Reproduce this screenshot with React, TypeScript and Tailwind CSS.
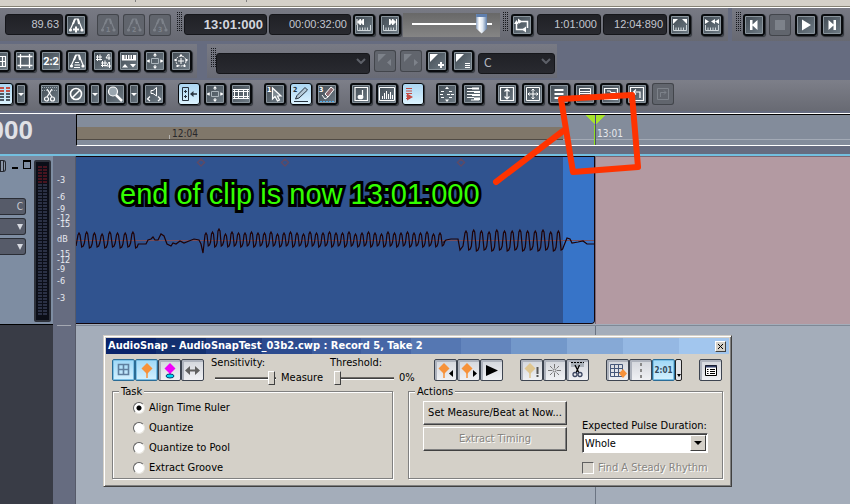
import type { ReactNode } from 'react';
import clsx from 'clsx';

type ToolProps = {
  label: string;
  children: ReactNode;
  active?: boolean;
  disabled?: boolean;
};

// --- Toolbar parts ---
function Tool({ label, children, active, disabled }: ToolProps) {
  return (
    <button
      type="button"
      aria-label={label}
      disabled={disabled}
      className={clsx(
        'h-[22px] w-[22px] shrink-0 rounded-[3px]',
        disabled && 'bg-[#61656d] text-[#7d828a] shadow-[inset_0_0_0_1px_#42454b]',
        active && 'bg-linear-to-b from-[#a9d4f0] to-[#def4ff] text-[#26323e] shadow-[inset_0_0_0_1px_#05070a,1px_1px_1px_#2f3238]',
        !active && !disabled && 'bg-linear-to-br from-[#3d464e] to-[#74818b] text-white shadow-[inset_0_0_0_2px_#090b0e,inset_0_0_0_3px_#89949c,1px_1px_1px_#2f3238]',
      )}
    >
      <svg viewBox="0 0 22 22" className="block h-[22px] w-[22px]" fill="none" stroke="currentColor" strokeWidth="1.2">
        {children}
      </svg>
    </button>
  );
}

function MenuArrow({ label }: { label: string }) {
  return (
    <button
      type="button"
      aria-label={label}
      className="h-[22px] w-[12px] shrink-0 rounded-[3px] bg-linear-to-br from-[#3d464e] to-[#74818b] shadow-[inset_0_0_0_2px_#090b0e,inset_0_0_0_3px_#89949c,1px_1px_1px_#2f3238]"
    >
      <svg viewBox="0 0 12 22" className="block h-[22px] w-[12px]">
        <path d="M3 10H9L6 13Z" fill="#fff" />
      </svg>
    </button>
  );
}

function Grip() {
  return <div className="-mt-0.5 h-5 w-[6px] shrink-0 bg-[conic-gradient(#15171c_25%,transparent_0)] bg-[length:2px_2px]" />;
}

function Readout({ children, bold, className }: { children: ReactNode; bold?: boolean; className?: string }) {
  return (
    <div
      className={clsx(
        "flex h-[21px] shrink-0 items-center justify-end rounded-[3px] border border-[#15161a] bg-linear-to-b from-[#202126] to-[#292a30] pr-[3px] font-['Liberation_Sans',Arial,sans-serif]",
        bold ? 'text-[13px] font-bold text-[#d3d6de]' : 'text-[11px] text-[#c3c6cf]',
        className,
      )}
    >
      {children}
    </div>
  );
}

function DarkSelect({ label, value, className }: { label: string; value: string; className: string }) {
  return (
    <div className={clsx('relative h-[21px] shrink-0', className)}>
      <select
        aria-label={label}
        className="h-full w-full appearance-none rounded-[3px] border border-[#15161a] bg-linear-to-b from-[#202126] to-[#292a30] px-[5px] text-[12px] leading-none text-[#b5b8c0]"
      >
        <option>{value}</option>
      </select>
      <svg viewBox="0 0 10 6" className="pointer-events-none absolute top-2 right-1 h-[6px] w-[10px]">
        <path d="M1 1L5 5L9 1" fill="none" stroke="#5d6068" strokeWidth="2" />
      </svg>
    </div>
  );
}

// --- Glyphs ---
const Metronome = () => (
  <>
    <path d="M5.500 15L10 5H13L17 15" />
    <path d="M10 5L8 10M13 5L14 10" strokeWidth="2" />
    <circle cx="5.500" cy="16" r="1.600" fill="currentColor" stroke="none" />
    <circle cx="17" cy="16" r="1.600" fill="currentColor" stroke="none" />
  </>
);

const RulerTicks = () => <path d="M4.500 11V16.500H17.500V11M7 16V13.500M9.500 16V13.500M12 16V13.500M14.500 16V13.500" stroke="#cfd6da" strokeWidth="1" />;

const Crosshair = () => (
  <>
    <path d="M7.500 8.500H14.500V13.500H7.500Z" stroke="#aab4bb" strokeWidth="1" />
    <path d="M11 4V7M11 15V18M3 11H6M16 11H19" strokeWidth="1" />
    <path d="M11 3L9 5.500H13ZM11 19L9 16.500H13ZM3 11L5.500 9V13ZM19 11L16.500 9V13Z" fill="currentColor" stroke="none" />
  </>
);

const Film = () => (
  <path d="M3 6.500H19M3 15.500H19M4.500 6V16M17.500 6V16M8.500 6V16M13.500 6V16M3 8.500H19M3 13.500H19" strokeWidth="1" />
);

const Digit = ({ x, y, children }: { x: number; y: number; children: string }) => (
  <text x={x} y={y} fontSize="7" fontWeight="700" fill="currentColor" stroke="none">
    {children}
  </text>
);

function TransportBar() {
  return (
    <div className="flex gap-1">
      <div className="flex h-[33px] gap-0.5 bg-linear-to-b from-[#787a84] to-[#676972] pt-[6px] pr-[5px] pl-[5px]">
        <Readout className="w-[58px]">89.63</Readout>
        <Tool label="Insert tempo">
          <Metronome />
          <path d="M8 15.500H14M11 12.500V18.500" strokeWidth="2" />
        </Tool>
        <div className="ml-2 flex gap-1">
          {['1', '2', '3'].map((n) => (
            <Tool key={n} label={`Tempo ratio ${n}`} disabled>
              <Metronome />
              <Digit x={9} y={18}>{n}</Digit>
            </Tool>
          ))}
        </div>
        <div className="ml-[3px]">
          <Grip />
        </div>
        <Readout bold className="w-[83px]">13:01:000</Readout>
        <Readout className="w-[82px]">00:00:32:00</Readout>
        <div className="flex gap-1">
          <Tool label="Rewind ruler">
            <RulerTicks />
            <path d="M4 5V11M10.500 5V11L7.500 8ZM7.500 5V11L4.500 8Z" fill="currentColor" strokeWidth="1" />
          </Tool>
          <Tool label="Forward ruler">
            <RulerTicks />
            <path d="M17.500 5V11M10.500 5V11L13.500 8ZM13.500 5V11L16.500 8Z" fill="currentColor" strokeWidth="1" />
          </Tool>
        </div>
        <div className="-mt-px h-6 w-[97px] bg-linear-to-b from-[#686868] to-[#858585] pr-2 pl-[9px]">
          <input
            type="range"
            aria-label="Position"
            defaultValue={93}
            className="block h-[21px] w-full appearance-none bg-[linear-gradient(#fff,#fff)] bg-[length:100%_2px] bg-center bg-no-repeat [&::-webkit-slider-thumb]:h-5 [&::-webkit-slider-thumb]:w-[11px] [&::-webkit-slider-thumb]:appearance-none [&::-webkit-slider-thumb]:bg-[linear-gradient(#5f7fae_0_3px,transparent_3px),linear-gradient(90deg,#8ba3c4,#fff_30%,#dce5ef_60%,#5f7ea8)] [&::-webkit-slider-thumb]:[clip-path:polygon(0_0,100%_0,100%_75%,50%_100%,0_75%)]"
          />
        </div>
        <Grip />
        <div className="ml-px mr-0.5">
          <Tool label="Loop">
            <path d="M7 7.500H16.500V14M15 15.500H5.500V8" strokeWidth="1.500" />
            <path d="M7 4.500V10.500L11 7.500ZM15 12.500V18.500L11 15.500ZM3 10L5.500 6L8 10Z" fill="currentColor" stroke="none" />
          </Tool>
        </div>
        <Readout className="w-[64px]">1:01:000</Readout>
        <Readout className="w-[64px]">12:04:890</Readout>
        <Tool label="Set loop to selection">
          <RulerTicks />
          <path d="M4 5H9L4 10ZM18 5H13L18 10Z" fill="currentColor" stroke="none" />
        </Tool>
        <div className="ml-2">
          <Tool label="Punch points">
            <RulerTicks />
            <path d="M4 5V10L8 7.500ZM14 5V10L10 7.500ZM18 5V10L14 7.500Z" fill="currentColor" stroke="none" />
          </Tool>
        </div>
      </div>
      <div className="flex h-[33px] flex-1 gap-0.5 bg-linear-to-b from-[#787a84] to-[#676972] pt-[6px] pl-[3px]">
        <Grip />
        <div className="flex gap-1">
          <Tool label="Go to start">
            <path d="M7 6H9.500V10.500L14.500 6V16L9.500 11.500V16H7Z" fill="currentColor" stroke="none" />
          </Tool>
          <Tool label="Stop" disabled>
            <path d="M6 6H16V16H6Z" fill="currentColor" stroke="none" />
          </Tool>
          <Tool label="Play">
            <path d="M7 5.500L16 11L7 16.500Z" fill="currentColor" stroke="none" />
          </Tool>
          <Tool label="Go to end">
            <path d="M15 6H12.500V10.500L7.500 6V16L12.500 11.500V16H15Z" fill="currentColor" stroke="none" />
          </Tool>
        </div>
      </div>
    </div>
  );
}

function ViewBar() {
  return (
    <div className="mt-[3px] flex gap-2.5">
      <div className="flex h-[34px] gap-1 bg-linear-to-b from-[#787a84] to-[#696b75] pt-[6px] pr-[5px]">
        <div className="-ml-3">
          <Tool label="Layout">
            <path d="M5.500 6.500H17.500V16.500H5.500ZM14.500 6V16M5 11.500H17" />
          </Tool>
        </div>
        <Tool label="Fit tracks">
          <path d="M3.500 6.500H18.500M3.500 15.500H18.500M6.500 4V18M15.500 4V18" strokeWidth="1.300" />
        </Tool>
        <Tool label="Ratio">
          <text x="11" y="15" textAnchor="middle" fontSize="11" fontWeight="700" fill="#fff" stroke="none" className="font-['Liberation_Sans_Narrow','Roboto',sans-serif]">
            2:2
          </text>
        </Tool>
        <Tool label="Tempo view">
          <Metronome />
          <path d="M9 12.500H13M8.500 15H14M8 17.500H14" />
        </Tool>
        <Tool label="Meter and key">
          <path d="M5.500 5V11M8 4.500V10.500M4 7H10M4 9.500H10M10.500 11V17M13 10.500V16.500M9 13H15M9 15.500H15" strokeWidth="1" />
          <path d="M16.500 4L14 8H18.500M17 4V10M17 12L14.500 16H19M17.500 12V18" strokeWidth="1" />
        </Tool>
        <Tool label="Staff">
          <path d="M4.500 5.500H17.500V10H4.500Z" fill="currentColor" />
          <path d="M7 5V9M9.500 5V9M12 5V9M14.500 5V9" stroke="#4a535b" strokeWidth="1" />
          <path d="M4 17.500H10L7 14ZM12 14H18L15 17.500Z" fill="currentColor" stroke="none" />
        </Tool>
        <Tool label="Navigator">
          <Crosshair />
        </Tool>
        <Tool label="Surround">
          <circle cx="11" cy="11" r="5" strokeWidth="1" strokeDasharray="2 1" />
          <path d="M11 8V14M8 11H14" strokeWidth="1" />
          <path d="M10 4.500H12V6.500H10ZM4.500 9H6.500V11H4.500ZM15.500 9H17.500V11H15.500ZM6.500 15H8.500V17H6.500ZM13.500 15H15.500V17H13.500Z" fill="currentColor" stroke="none" />
        </Tool>
      </div>
      <div className="flex h-[34px] gap-1 bg-linear-to-b from-[#787a84] to-[#696b75] pt-[6px] pr-[2px] pl-[3px]">
        <Grip />
        <DarkSelect label="Workspace" value="" className="-ml-1 w-[154px]" />
        <Tool label="Previous marker" disabled>
          <path d="M4 4H12L4 12ZM17 9V16L13 12.500Z" fill="currentColor" stroke="none" />
        </Tool>
        <Tool label="Next marker" disabled>
          <path d="M4 4H12L4 12ZM14 9V16L18 12.500Z" fill="currentColor" stroke="none" />
        </Tool>
        <Tool label="Add marker">
          <path d="M4 4H12L4 12Z" fill="currentColor" stroke="none" />
          <path d="M12 15H18M15 12V18" strokeWidth="2" />
        </Tool>
        <Tool label="Marker list">
          <path d="M4 4H12L4 12Z" fill="currentColor" stroke="none" />
          <path d="M13 13.500H18M13 15.500H18M13 17.500H18" strokeWidth="1" />
        </Tool>
        <DarkSelect label="Key" value="C" className="w-[77px]" />
      </div>
    </div>
  );
}

function EditBar() {
  return (
    <div className="mt-0.5 flex h-[31px] bg-linear-to-b from-[#7d7f89] to-[#686a73] pt-[3px]">
      <div className="-ml-[9px] flex gap-0.5">
        <Tool label="Snap grid" active>
          <path d="M11 4V18M17 4V18" strokeWidth="4" strokeDasharray="2 1" stroke="#4d5964" />
          <path d="M9 5H13M15 5H19M9 8H13M15 8H19" stroke="#c24f46" strokeWidth="2" />
        </Tool>
        <MenuArrow label="Snap options" />
      </div>
      <div className="ml-3 flex gap-1">
        <Tool label="Split">
          <path d="M3 4.500H19M3 7.500H19" stroke="#9da7af" strokeWidth="1" strokeDasharray="1 1" />
          <path d="M8 6L13 14M13 6L8 14" />
          <circle cx="7.500" cy="16" r="2" />
          <circle cx="13.500" cy="16" r="2" />
        </Tool>
        <div className="flex gap-0.5">
          <Tool label="Mute tool">
            <circle cx="11" cy="11" r="5.500" strokeWidth="1.600" />
            <path d="M7 15L15 7" strokeWidth="1.600" />
          </Tool>
          <MenuArrow label="Mute options" />
        </div>
        <div className="-ml-px flex gap-0.5">
          <Tool label="Zoom tool">
            <circle cx="9" cy="8.500" r="4.500" fill="#9aa6af" />
            <path d="M12 12L18 18" strokeWidth="2.500" />
          </Tool>
          <MenuArrow label="Zoom options" />
        </div>
        <div className="-ml-px">
          <Tool label="Scrub tool">
            <path d="M8 7.500H10L13.500 4.500V13L10 10.500H8Z" strokeWidth="1" />
            <path d="M7 13.500L4.500 16L7 18M15 13.500L17.500 16L15 18" />
          </Tool>
        </div>
      </div>
      <div className="ml-[13px] flex gap-1">
        <Tool label="Show envelopes" active>
          <path d="M4.500 4.500H10.500V17.500H4.500ZM7.500 7V10M6 8.500H9M7.500 12V15M6 13.500H9" strokeWidth="1" />
          <path d="M12 11L15.500 8V10.300H19V11.700H15.500V14Z" fill="currentColor" stroke="none" />
        </Tool>
        <Tool label="Move clips">
          <Crosshair />
        </Tool>
        <Tool label="Filmstrip">
          <Film />
        </Tool>
      </div>
      <div className="ml-3 flex gap-1">
        <Tool label="Select tool">
          <Digit x={3} y={9}>1</Digit>
          <path d="M8.500 5V16L11 13.500L13.500 18L15.500 17L13.500 13H17Z" fill="#7d8890" />
        </Tool>
        <Tool label="Draw tool" active>
          <Digit x={3} y={9}>2</Digit>
          <path d="M5.500 16L7 12.500L15 4.500L17.500 7L9 15Z" fill="#b4c9d7" strokeWidth="1" />
          <path d="M4 18.500H18" strokeWidth="1" />
        </Tool>
        <Tool label="Erase tool">
          <Digit x={3} y={9}>3</Digit>
          <path d="M9 11L15 4L18 6.500L12 14Z" fill="#8d6d72" strokeWidth="1" />
          <path d="M9 11L12 14M6 12L9 16L12 14" strokeWidth="1" />
          <path d="M4 18.500H18" stroke="#4eaef0" strokeWidth="1" strokeDasharray="2 1" />
        </Tool>
      </div>
      <div className="ml-3 flex gap-1">
        <Tool label="Staff view">
          <path d="M5 4.500H17.500V17.500H5ZM12.500 7V13.500" />
          <ellipse cx="10.500" cy="14" rx="2.300" ry="1.700" fill="currentColor" />
        </Tool>
        <Tool label="Piano roll">
          <path d="M3.500 4.500H18.500V17.500H3.500ZM6.500 16V13M8.500 16V10M10.500 16V8M12.500 16V11M14.500 16V9M16.500 16V12" strokeWidth="1" />
        </Tool>
        <Tool label="Event list" active>
          <path d="M4 5.500H10M4 8H10M4 10.500H10M4 13H8M4 15.500H8" stroke="#c64b43" />
          <path d="M5 10.500L11 14L5 17.500Z" fill="#c64b43" stroke="none" />
        </Tool>
      </div>
      <div className="ml-3 flex gap-1">
        <Tool label="Nudge">
          <path d="M5 8.500H9M13 8.500H17M4 11.500H8M11 11.500H18M5 14.500H9M13 14.500H17" strokeWidth="1" strokeDasharray="3 1" />
          <path d="M9 6H13L11 3.500ZM9 16.500H13L11 19Z" fill="currentColor" stroke="none" />
        </Tool>
        <Tool label="Layers">
          <path d="M5 5.500H10M5 8.500H12M5 11.500H10M5 14.500H12M9 17H17" strokeWidth="1" />
          <path d="M10 4.500H17V6.500H10ZM12 8H18V10H12ZM10 11H18V13H10ZM12 14.500H18V17H12Z" fill="currentColor" stroke="none" />
        </Tool>
      </div>
      <div className="ml-3 flex gap-1">
        <Tool label="Fit height">
          <path d="M4.500 4.500H17.500V17.500H4.500ZM11 7V15M8.500 8.500L11 6L13.500 8.500M8.500 13.500L11 16L13.500 13.500" />
        </Tool>
        <Tool label="Fit window">
          <path d="M4.500 4.500H17.500V17.500H4.500ZM11 6V16M6 11H16M9.500 7.500L11 6L12.500 7.500M9.500 14.500L11 16L12.500 14.500M7.500 9.500L6 11L7.500 12.500M14.500 9.500L16 11L14.500 12.500" strokeWidth="1" />
        </Tool>
        <Tool label="Track list">
          <path d="M6.500 7H15.500M6.500 11H15.500M6.500 15H15.500" strokeWidth="2" />
        </Tool>
        <Tool label="Split view">
          <path d="M5.500 5.500H16.500V16.500H5.500ZM5 10.500H17M5 8.500H17" strokeWidth="1" />
        </Tool>
        <Tool label="Folder view">
          <path d="M4.500 5.500H17.500V16.500H4.500ZM7 8H10L11 9.500H15V14" />
        </Tool>
        <Tool label="Undo view">
          <path d="M4.500 4.500H17.500V17.500H4.500ZM14 15V9H8M10 6.500L7.500 9L10 11.500" />
        </Tool>
        <Tool label="Redo view" disabled>
          <path d="M5.500 5.500H16.500V16.500H5.500ZM8.500 14V9.500H14M12 7.500L14 9.500L12 11.500" strokeWidth="1" />
        </Tool>
      </div>
    </div>
  );
}

// --- Timeline ---
function TimeRuler() {
  return (
    <div className="mt-0.5 flex h-[41px] border-t border-white">
      <div className="flex w-[76px] shrink-0 items-start">
        <div className="flex w-[33px] justify-end pt-[2px] text-[26px] leading-7 font-bold text-[#e0e1e6] font-['Liberation_Sans',Arial,sans-serif]">
          000
        </div>
      </div>
      <div className="relative h-8 flex-1 border-t border-b border-l border-t-black border-b-white border-l-black bg-[#838c9b]">
        <div className="mt-3 h-3 w-[486px] bg-[#80776a]" />
        <div className="flex h-px">
          <div className="w-[486px] bg-[#504a44]" />
          <div className="flex-1 bg-[#a3aab6]" />
        </div>
        <div className="absolute top-[13px] left-[92px] flex items-end gap-[2px] text-[10px] leading-[11px] text-[#28272b]">
          <span className="h-1 w-px bg-[#b5b3b0]" />
          12:04
        </div>
        <svg viewBox="0 0 20 30" className="absolute top-0 left-[508px] h-[30px] w-5" shapeRendering="crispEdges">
          <path d="M0 0H20L10 10Z" fill="#a6e22e" />
          <path d="M10 0H11V10H10Z" fill="#4d3f8f" />
          <path d="M9 10H10V30H9Z" fill="#8fe020" />
          <path d="M10 10H11V30H10Z" fill="#4c5560" />
        </svg>
        <div className="absolute top-[13px] left-[520px] text-[10px] leading-[11px] text-[#e6e8ec]">13:01</div>
      </div>
    </div>
  );
}

const dbMarks = [
  { text: '-3', h: 'h-[17px]' },
  { text: '-6', h: 'h-[12px]' },
  { text: '-9', h: 'h-[9px]' },
  { text: '-12', h: 'h-[6px]' },
  { text: '-15', h: 'h-[15px]' },
  { text: 'dB', h: 'h-[15px]' },
  { text: '-15', h: 'h-[6px]' },
  { text: '-12', h: 'h-[9px]' },
  { text: '-9', h: 'h-[12px]' },
  { text: '-6', h: 'h-[17px]' },
  { text: '-3', h: 'h-[10px]' },
];

function TrackControls() {
  return (
    <div className="flex h-[169px] border-b border-black bg-[#7e8da2]">
      <div className="w-[34px] pt-1">
        <div className="flex h-[38px] items-start">
          <div className="h-3 w-[6px] rounded-r-[3px] border border-l-0 border-[#23262d] bg-[repeating-linear-gradient(90deg,#23262d_0_1px,#8b97a8_1px_3px)]" />
          <button type="button" aria-label="Minimize track" className="mt-[7px] ml-[6px] h-0.5 w-[6px] bg-black" />
          <button type="button" aria-label="Maximize track" className="ml-[5px] h-[9px] w-2 border border-t-2 border-black" />
        </div>
        <div className="flex w-[26px] flex-col gap-[3px] text-[10px] text-[#c8cbd2]">
          <div className="flex h-[17px] items-center justify-end rounded-r-[3px] border border-l-0 border-[#2a2d35] bg-[#565b69] pr-[2px]">C</div>
          {['Input', 'Output'].map((name) => (
            <button
              key={name}
              type="button"
              aria-label={name}
              className="flex h-[17px] items-center justify-end rounded-r-[3px] border border-l-0 border-[#2a2d35] bg-[#565b69] pr-[2px]"
            >
              <svg viewBox="0 0 6 6" className="h-[6px] w-[6px]">
                <path d="M0 0H6L3 6Z" fill="#d5d8df" />
              </svg>
            </button>
          ))}
        </div>
      </div>
      <div className="mt-1 flex h-[162px] w-[17px] justify-center gap-px rounded-[2px] border-2 border-[#2e323b] bg-[#0b0e17] pt-1 pb-1">
        {[0, 1].map((ch) => (
          <div key={ch} className="flex w-1 flex-col">
            <div className="h-[18px] bg-[repeating-linear-gradient(#491520_0_2px,#0b0e17_2px_3px)]" />
            <div className="flex-1 bg-[repeating-linear-gradient(#2b3145_0_2px,#0b0e17_2px_3px)]" />
          </div>
        ))}
      </div>
    </div>
  );
}

type Run = { from: number; to: number; pitch: number; top: number; low: number };

// peaks of the recorded take, in clip pixels
const runs: Run[] = [
  { from: 3, to: 64, pitch: 7.7, top: -8, low: 6 },
  { from: 130, to: 366, pitch: 6.5, top: -8, low: 5 },
  { from: 390, to: 484, pitch: 7.7, top: -10, low: 9 },
];

const bridges: Record<number, string> = {
  0: 'L70 3 L72 -1 L75 -2 L77 -4 L79 -1 L82 -1 L85 -7 L88 -5 L91 3 L95 5 L97 2 L100 3 L104 0 L108 2 L113 0 L118 -2 L123 -1 L125 3 L127 12',
  1: 'L368 1 L370 -1 L375 -2 L382 -2 L384 9 L387 5',
  2: 'L491 -3 L494 -2 L496 2 L502 1 L507 0 L511 3 L518 3',
};

function wavePath() {
  let d = 'M0 5';
  runs.forEach((run, i) => {
    let n = 0;
    for (let x = run.from; x < run.to; x += run.pitch) {
      const top = run.top + (n % 3 === 1 ? -1 : n % 4 === 3 ? 1 : 0) - (i === 1 && n === 2 ? 4 : 0);
      const low = run.low + (n % 2);
      d += ` L${x - 1} ${top + 2} L${x} ${top} L${x + 1} ${top + 2} L${x + run.pitch * 0.35} ${low} L${x + run.pitch * 0.55} ${low - 1} L${x + run.pitch * 0.7} ${low - 4}`;
      n++;
    }
    d += ` ${bridges[i]}`;
  });
  return d;
}

function AudioClip() {
  return (
    <div className="relative h-[168px] w-[519px] shrink-0 overflow-hidden rounded-br-[4px] border-t border-r border-b border-[#12060c] bg-[#30538f]">
      <div className="ml-auto h-full w-[31px] bg-[#3774c8]" />
      <svg viewBox="0 -84 519 168" className="absolute top-0 left-0 h-[168px] w-[519px]" fill="none">
        <path d="M0 -0.500H519" stroke="#79505f" />
        <path d={wavePath()} stroke="#1f0206" strokeWidth="1.200" />
        <path d="M125 -82L128.500 -78.500L125 -75L121.500 -78.500ZM209 -82L212.500 -78.500L209 -75L205.500 -78.500ZM385 -82L388.500 -78.500L385 -75L381.500 -78.500Z" stroke="#5d4a66" strokeWidth="1.500" />
      </svg>
    </div>
  );
}

// --- AudioSnap window ---
function SnapTool({ label, children, active }: ToolProps) {
  return (
    <button
      type="button"
      aria-label={label}
      className={clsx(
        'h-[22px] w-[23px] shrink-0 rounded-[2px] border',
        active
          ? 'border-[#2b6c96] bg-linear-to-b from-[#9fd8f7] to-[#d4f1ff] shadow-[inset_0_0_0_1px_#7cc0e6]'
          : 'border-[#3d4450] bg-linear-to-b from-[#d3d6dc] to-[#f0f1f4] shadow-[inset_1px_1px_0_1px_#aeb3bd]',
      )}
    >
      <svg viewBox="0 0 21 20" className="block h-5 w-[21px]" fill="none" stroke="#000">
        {children}
      </svg>
    </button>
  );
}

const Pin = ({ x = 11, color = '#f7923a' }: { x?: number; color?: string }) => (
  <g transform={`translate(${x} 0)`}>
    <path d="M0 3L5.500 8.500L0 14L-5.500 8.500Z" fill={color} stroke="none" />
    <path d="M0 12V18" stroke={color} strokeWidth="1.500" />
  </g>
);

const rangeStyle =
  'block h-[14px] appearance-none bg-[linear-gradient(#6f6c67_0_1px,#404040_1px_2px,#fff_2px)] bg-[length:100%_3px] bg-center bg-no-repeat [&::-webkit-slider-thumb]:h-[14px] [&::-webkit-slider-thumb]:w-[7px] [&::-webkit-slider-thumb]:appearance-none [&::-webkit-slider-thumb]:border [&::-webkit-slider-thumb]:border-t-white [&::-webkit-slider-thumb]:border-l-white [&::-webkit-slider-thumb]:border-r-[#404040] [&::-webkit-slider-thumb]:border-b-[#404040] [&::-webkit-slider-thumb]:bg-[#d4d0c8]';

const groupStyle = 'h-[94px] min-w-0 border border-[#808080] shadow-[1px_1px_0_#fff,inset_1px_1px_0_#fff]';

const pushStyle = 'h-6 border border-t-white border-l-white border-r-[#404040] border-b-[#404040] shadow-[inset_-1px_-1px_0_#808080]';

const tasks = ['Align Time Ruler', 'Quantize', 'Quantize to Pool', 'Extract Groove'];

function SnapToolbar() {
  return (
    <div className="flex h-[26px] px-[6px]">
      <div className="flex">
        <SnapTool label="Edit clip map" active>
          <path d="M5.500 4.500H15.500V14.500H5.500ZM10.500 4V14M5 9.500H15" stroke="#5f7f9f" strokeWidth="1.600" />
        </SnapTool>
        <SnapTool label="Show transients" active>
          <Pin />
        </SnapTool>
        <SnapTool label="Show pool">
          <Pin color="#f000f8" />
          <ellipse cx="11" cy="16" rx="4" ry="2" fill="#00d8f0" stroke="#0a3a70" />
        </SnapTool>
        <SnapTool label="Stretch">
          <path d="M3 10.500L8 6V9.500H13V6L18 10.500L13 15V11.500H8V15Z" fill="#606060" stroke="none" />
        </SnapTool>
      </div>
      <div className="ml-[7px] flex w-[119px] items-end">
        <div className="w-[67px]">
          <label htmlFor="sensitivity" className="-mt-[3px] block h-[15px] whitespace-nowrap">Sensitivity:</label>
          <input id="sensitivity" type="range" defaultValue={98} className={clsx(rangeStyle, 'ml-1 w-[61px]')} />
        </div>
        <span className="ml-[3px]">Measure</span>
      </div>
      <div className="flex w-[104px] items-end">
        <div className="w-[66px]">
          <label htmlFor="threshold" className="-mt-[3px] block h-[15px] whitespace-nowrap">Threshold:</label>
          <input id="threshold" type="range" defaultValue={0} className={clsx(rangeStyle, 'ml-1 w-[60px]')} />
        </div>
        <span className="ml-[3px]">0%</span>
      </div>
      <div className="flex">
        <SnapTool label="Previous transient">
          <Pin x={9} />
          <path d="M18 10V17L14 13.500Z" fill="#000" stroke="none" />
        </SnapTool>
        <SnapTool label="Next transient">
          <Pin x={9} />
          <path d="M15 10V17L19 13.500Z" fill="#000" stroke="none" />
        </SnapTool>
        <SnapTool label="Play slice">
          <path d="M5 5L17 10.500L5 16Z" fill="#000" stroke="none" />
        </SnapTool>
      </div>
      <div className="ml-[17px] flex">
        <SnapTool label="Promote transient">
          <Pin x={9} color="#dfc690" />
          <path d="M16.500 7V14M16.500 15V17" stroke="#555" strokeWidth="2" />
        </SnapTool>
        <SnapTool label="Enable transient">
          <path d="M10.500 4V8M10.500 13V17M4 10.500H8M13 10.500H17M6 6L8.500 8.500M12.500 12.500L15 15M15 6L12.500 8.500M8.500 12.500L6 15" stroke="#777" />
          <circle cx="10.500" cy="10.500" r="1.500" stroke="#777" />
        </SnapTool>
        <SnapTool label="Split at transients">
          <path d="M4 2H17V7H4Z" fill="#a9b0b8" stroke="none" />
          <path d="M4 2.500H17" strokeDasharray="2 1" />
          <path d="M8 5L12 13M12.500 5L9 13" strokeWidth="1.300" />
          <circle cx="8" cy="14.500" r="2" stroke="#3b4560" strokeWidth="1.300" />
          <circle cx="13" cy="14.500" r="2" stroke="#3b4560" strokeWidth="1.300" />
        </SnapTool>
      </div>
      <div className="ml-[17px] flex">
        <SnapTool label="Snap to grid">
          <path d="M3.500 4.500H15.500V16.500H3.500ZM7.500 4V17M11.500 4V17M3 8.500H16M3 12.500H16" stroke="#46587a" />
          <path d="M16 9L20 13.500L16 18L12 13.500Z" fill="#f7923a" stroke="none" />
        </SnapTool>
        <SnapTool label="Beat divider">
          <path d="M11 3V18" stroke="#888" strokeWidth="2" strokeDasharray="3 3" />
        </SnapTool>
        <SnapTool label="Show beat values" active>
          <text x="10.500" y="13" textAnchor="middle" fontSize="8" fontWeight="700" fill="#334a5c" stroke="none">2:01</text>
        </SnapTool>
        <button type="button" aria-label="Beat value options" className="flex h-[22px] w-[7px] items-end justify-center rounded-[2px] border border-[#222] bg-[#e4e4e8] pb-[3px]">
          <svg viewBox="0 0 4 3" className="h-[3px] w-1">
            <path d="M0 0H4L2 3Z" />
          </svg>
        </button>
      </div>
      <div className="ml-[17px]">
        <SnapTool label="Properties">
          <path d="M5.500 5.500H16.500V15.500H5.500Z" fill="#fff" />
          <path d="M5.500 6.500H16.500" stroke="#333f66" strokeWidth="2" />
          <path d="M7 9.500H8.500M10 9.500H15M7 11.500H8.500M10 11.500H15M7 13.500H8.500M10 13.500H15" />
        </SnapTool>
      </div>
    </div>
  );
}

function AudioSnapWindow() {
  return (
    <section
      aria-label="AudioSnap"
      className="absolute top-[179px] left-[103px] w-[629px] border border-t-[#d4d0c8] border-r-[#404040] border-b-[#404040] border-l-[#d4d0c8] bg-[#d4d0c8] p-[2px] text-[11px] leading-[14px] text-black shadow-[inset_1px_1px_0_#fff,inset_-1px_-1px_0_#808080]"
    >
      <header className="flex h-4 items-center justify-between bg-[linear-gradient(90deg,#0a246a_0_8%,#13306f_8%_16%,#1f3c80_16%_25%,#2c4b8f_25%_33%,#3a5a9c_33%_41%,#4666a6_41%_49%,#5577b2_49%_57%,#6385bd_57%_65%,#7398ca_65%_74%,#86a9d6_74%_83%,#95b8e3_83%_92%,#a2c6ee_92%)] pr-[3px] pl-[2px]">
        <h1 className="font-bold whitespace-nowrap text-white">AudioSnap - AudioSnapTest_03b2.cwp : Record 5, Take 2</h1>
        <button
          type="button"
          aria-label="Close"
          className="flex h-[11px] w-[11px] items-center justify-center border border-t-white border-l-white border-r-[#404040] border-b-[#404040] bg-[#d4d0c8]"
        >
          <svg viewBox="0 0 7 7" className="h-[7px] w-[7px]">
            <path d="M1 1L6 6M6 1L1 6" stroke="#000" />
          </svg>
        </button>
      </header>
      <div className="pt-[5px]">
        <SnapToolbar />
      </div>
      <div className="flex gap-[15px] px-[6px] pb-[5px]">
        <fieldset className={clsx(groupStyle, 'w-[281px] shrink-0')}>
          <legend className="ml-[6px] h-[13px] bg-[#d4d0c8] px-[2px] leading-[13px]">Task</legend>
          <div className="flex flex-col gap-[6px] pt-[3px] pl-5">
            {tasks.map((task, i) => (
              <label key={task} className="flex items-center gap-1">
                <input
                  type="radio"
                  name="task"
                  defaultChecked={i === 0}
                  className="m-0 h-3 w-3 appearance-none rounded-full border border-t-[#606060] border-r-[#e8e6e0] border-b-[#e8e6e0] border-l-[#606060] bg-white checked:bg-[radial-gradient(circle,#000_2px,#fff_3px)]"
                />
                {task}
              </label>
            ))}
          </div>
        </fieldset>
        <fieldset className={clsx(groupStyle, 'flex-1')}>
          <legend className="ml-[6px] h-[13px] bg-[#d4d0c8] px-[2px] leading-[13px]">Actions</legend>
          <div className="flex gap-[15px] pr-[14px] pl-[14px]">
            <div className="flex w-[144px] shrink-0 flex-col gap-[2px] pt-[3px]">
              <button type="button" className={clsx(pushStyle, 'whitespace-nowrap')}>Set Measure/Beat at Now...</button>
              <button type="button" disabled className={clsx(pushStyle, 'text-[#868480] [text-shadow:1px_1px_0_#fff]')}>
                Extract Timing
              </button>
            </div>
            <div className="min-w-0 flex-1 pt-[21px]">
              <label htmlFor="pulse" className="block whitespace-nowrap">Expected Pulse Duration:</label>
              <div className="relative">
                <select
                  id="pulse"
                  className="block h-5 w-full appearance-none border border-t-[#606060] border-r-white border-b-white border-l-[#606060] bg-white px-[2px] leading-none shadow-[inset_1px_1px_0_#404040]"
                >
                  <option>Whole</option>
                </select>
                <div className="pointer-events-none absolute top-[2px] right-[2px] flex h-4 w-4 items-center justify-center border border-t-white border-r-[#404040] border-b-[#404040] border-l-white bg-[#d4d0c8]">
                  <svg viewBox="0 0 8 4" className="h-1 w-2">
                    <path d="M0 0H8L4 4Z" />
                  </svg>
                </div>
              </div>
              <label className="mt-2 flex items-center gap-1 whitespace-nowrap text-[#868480] [text-shadow:1px_1px_0_#fff]">
                <input
                  type="checkbox"
                  disabled
                  className="m-0 h-3 w-3 shrink-0 appearance-none border border-t-[#606060] border-r-white border-b-white border-l-[#606060] bg-[#d4d0c8]"
                />
                Find A Steady Rhythm
              </label>
            </div>
          </div>
        </fieldset>
      </div>
    </section>
  );
}

export default function App() {
  return (
    <div className="relative flex min-h-screen flex-col overflow-hidden bg-[#666c80] font-['DejaVu_Sans_Condensed','Noto_Sans',sans-serif]">
      <div className="flex h-2 items-start border-b border-white bg-[#d4d0c8] shadow-[inset_0_-1px_0_#858274]">
        <span className="ml-[135px] h-0.5 w-px bg-[#808080]" />
        <span className="ml-[110px] h-0.5 w-px bg-[#808080]" />
      </div>
      <TransportBar />
      <ViewBar />
      <EditBar />
      <TimeRuler />
      <div className="h-0.5 bg-[#73bfdf]" />

      <main className="relative flex flex-1">
        <div className="w-[53px] shrink-0 bg-[#393c46]">
          <TrackControls />
        </div>
        <div className="w-[23px] shrink-0 border-r border-[#565a69] pl-1">
          <div className="flex h-[169px] flex-col pt-[19px] text-[9px] leading-[10px] text-[#e8eaf0]">
            {dbMarks.map((mark, i) => (
              <div key={i} className={mark.h}>
                {mark.text}
              </div>
            ))}
          </div>
          <div className="mr-1 h-px bg-[#a4a8b2]" />
        </div>
        <div className="flex min-w-0 flex-1 flex-col bg-[#a4adba]">
          <div className="flex">
            <AudioClip />
            <div className="flex-1 border-t border-l border-[#7c6672] bg-[#b39aa2]" />
          </div>
          <div className="mt-px h-px bg-[#7f8996]" />
          <div className="w-[520px] flex-1 border-r border-[#6b7482]" />
        </div>
        <AudioSnapWindow />
      </main>

      {/* Annotation */}
      <svg viewBox="0 0 160 90" className="pointer-events-none absolute top-[90px] left-[490px] h-[90px] w-[160px] overflow-visible" fill="none" stroke="#ff3300" strokeWidth="6" strokeLinecap="round" strokeLinejoin="round">
        <path d="M71 9L142 5L148 77L83 82ZM6 92L73 41" />
      </svg>
      <p className="pointer-events-none absolute top-[176px] left-[120px] text-[29px] leading-9 whitespace-nowrap text-[#33ff00] font-['Liberation_Sans',Arial,sans-serif] [-webkit-text-stroke:6px_#000] [paint-order:stroke_fill] [stroke-linejoin:round]">
        end of clip is now 13:01:000
      </p>
    </div>
  );
}
